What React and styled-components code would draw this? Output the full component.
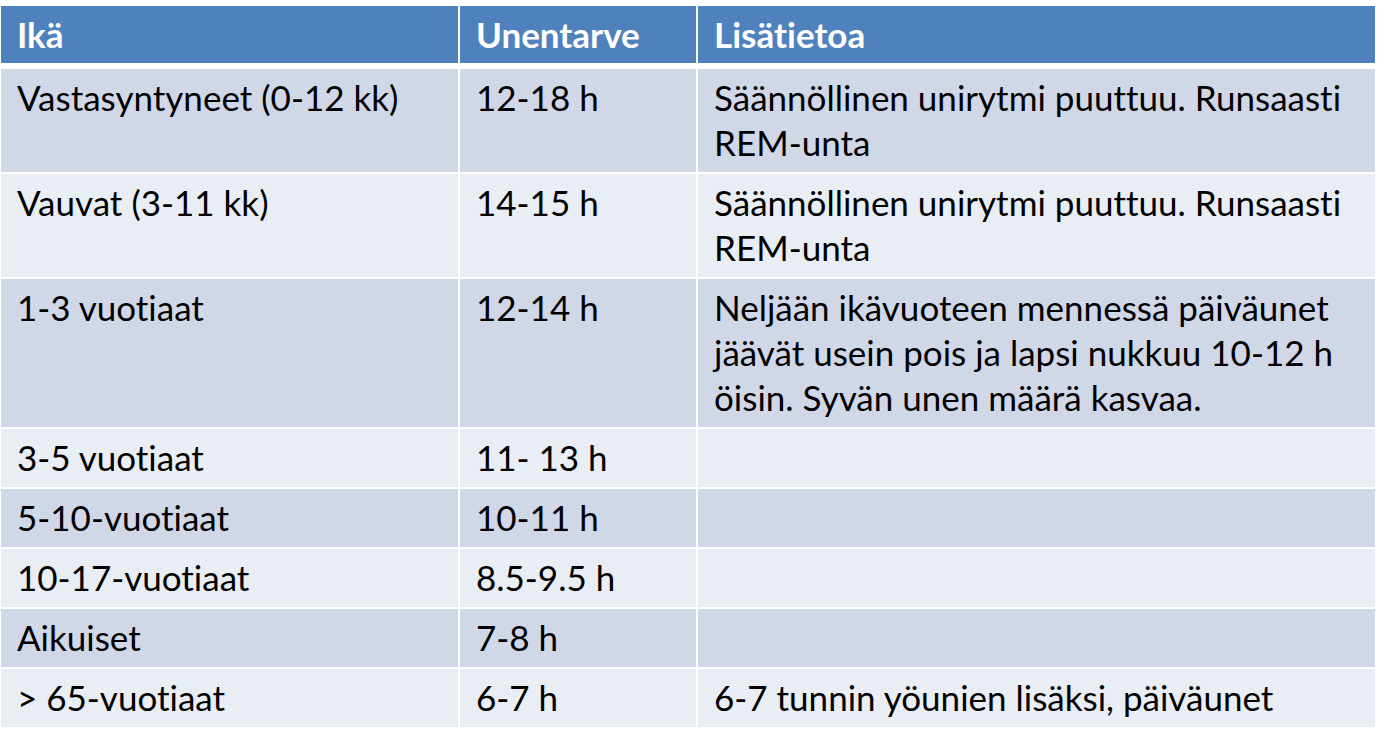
import React from 'react';
import styled, { createGlobalStyle } from 'styled-components';

const GlobalStyle = createGlobalStyle`
  html, body {
    margin: 0;
    background: #fff;
  }
  body {
    font-family: Lato, "Open Sans", sans-serif;
    font-variant-ligatures: none;
    color: #000;
  }
`;

const Page = styled.div`
  padding: 6px 2px 0 1px;
`;

const Table = styled.div`
  display: flex;
  flex-direction: column;
  gap: 2px;
`;

const Row = styled.div`
  display: grid;
  grid-template-columns: 457px 236px 1fr;
  column-gap: 2px;
  margin-bottom: ${(p) => (p.$head ? '4px' : '0')};
`;

const Cell = styled.div`
  background: ${(p) => (p.$head ? '#4f81bd' : p.$dark ? '#d0d8e8' : '#e9edf4')};
  color: ${(p) => (p.$head ? '#fff' : '#000')};
  font-weight: ${(p) => (p.$head ? 700 : 400)};
  font-size: 35px;
  line-height: 45px;
  padding: ${(p) => (p.$head ? '6px 15px 6px 16px' : '6px 15px 7px 16px')};
  white-space: nowrap;
`;

const rows = [
  ['Vastasyntyneet (0-12 kk)', '12-18 h', ['Säännöllinen unirytmi puuttuu. Runsaasti', 'REM-unta']],
  ['Vauvat (3-11 kk)', '14-15 h', ['Säännöllinen unirytmi puuttuu. Runsaasti', 'REM-unta']],
  ['1-3 vuotiaat', '12-14 h', ['Neljään ikävuoteen mennessä päiväunet', 'jäävät usein pois ja lapsi nukkuu 10-12 h', 'öisin. Syvän unen määrä kasvaa.']],
  ['3-5 vuotiaat', '11- 13 h', []],
  ['5-10-vuotiaat', '10-11 h', []],
  ['10-17-vuotiaat', '8.5-9.5 h', []],
  ['Aikuiset', '7-8 h', []],
  ['> 65-vuotiaat', '6-7 h', ['6-7 tunnin yöunien lisäksi, päiväunet']],
];

export default function App() {
  return (
    <Page>
      <GlobalStyle />
      <Table>
        <Row $head>
          <Cell $head>Ikä</Cell>
          <Cell $head>Unentarve</Cell>
          <Cell $head>Lisätietoa</Cell>
        </Row>
        {rows.map(([age, need, info], i) => (
          <Row key={age}>
            <Cell $dark={i % 2 === 0}>{age}</Cell>
            <Cell $dark={i % 2 === 0}>{need}</Cell>
            <Cell $dark={i % 2 === 0}>
              {info.map((line, j) => (
                <div key={j}>{line}</div>
              ))}
            </Cell>
          </Row>
        ))}
      </Table>
    </Page>
  );
}
